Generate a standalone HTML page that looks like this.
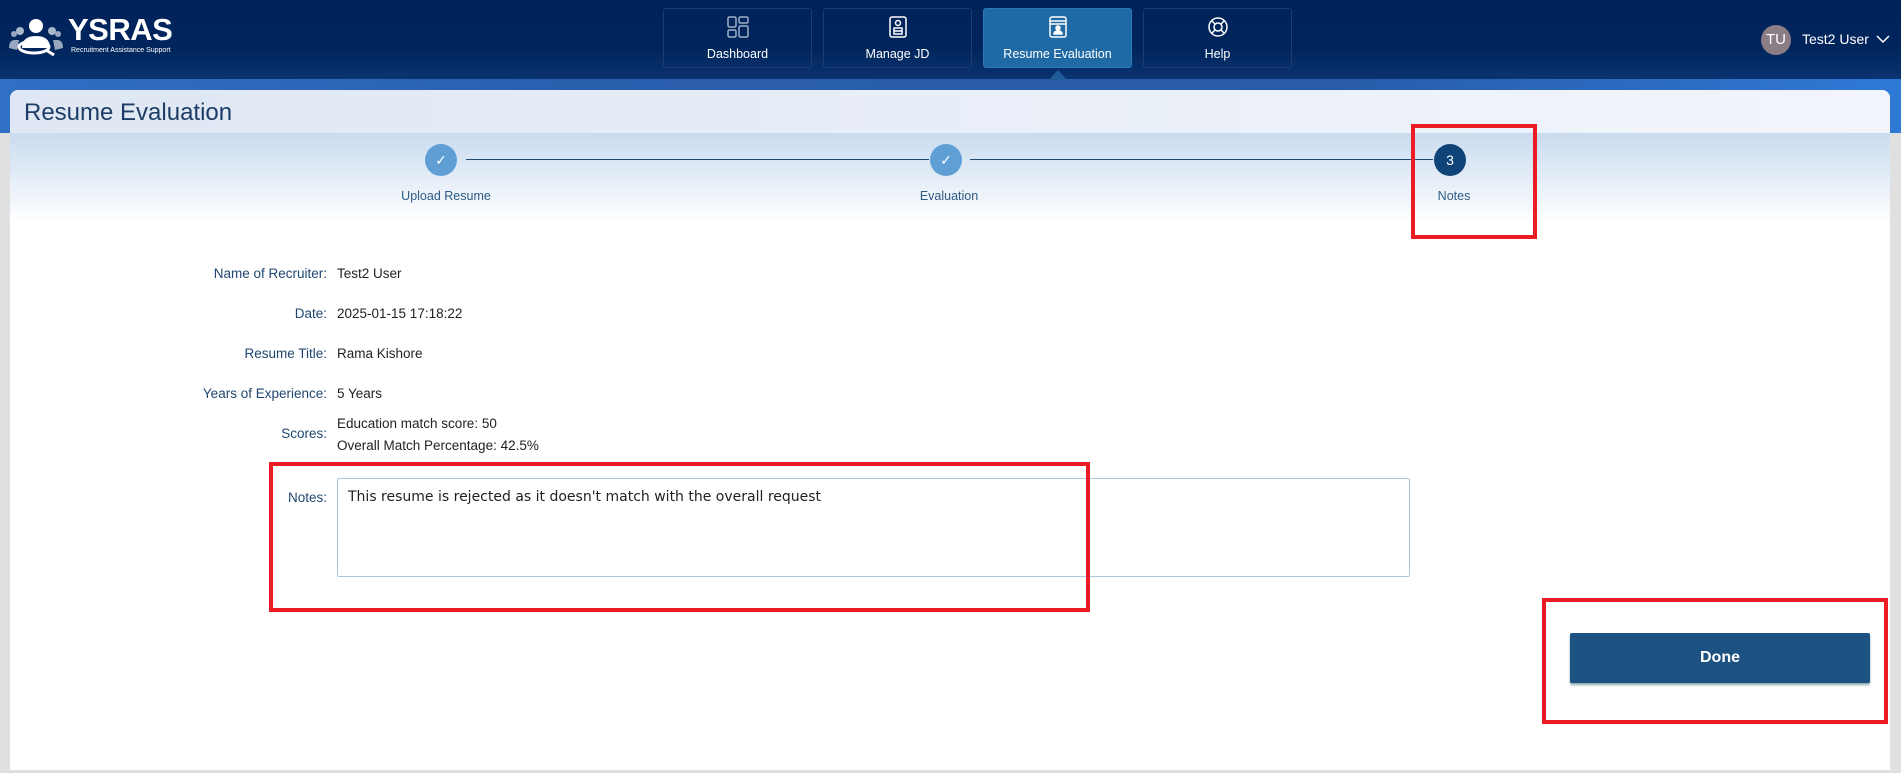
<!DOCTYPE html>
<html><head><meta charset="utf-8"><style>
*{margin:0;padding:0;box-sizing:border-box}
body{width:1901px;height:764px;overflow:hidden;font-family:"Liberation Sans",sans-serif;background:#e0e0e0;position:relative}
.a{position:absolute}
.hdr{left:0;top:0;width:1901px;height:79px;background:linear-gradient(#00225a,#00255c 60%,#0b3370)}
.band{left:0;top:79px;width:1901px;height:54px;background:linear-gradient(90deg,#2f6fc4,#2a5fae 30%,#285ba9 70%,#2f79d6)}
.nav{top:8px;height:60px;width:149px;border:1px solid #1e3d6e;border-radius:3px;color:#fff;font-size:12.5px;text-align:center}
.nav span{position:absolute;left:0;right:0;top:38px}
.nav svg{position:absolute;left:62px;top:6px}
.card{left:10px;top:90px;width:1880px;height:680px;background:#fff;border-radius:8px 8px 0 0;overflow:hidden}
.title{left:0;top:0;width:1880px;height:43px;background:linear-gradient(90deg,#dfe7f4,#f2f5fb)}
.step{left:0;top:43px;width:1880px;height:90px;background:linear-gradient(#c9dbef,#fff)}
.c{width:32px;height:32px;border-radius:50%;color:#fff;text-align:center;line-height:32px;font-size:14px}
.lbl{font-size:12.5px;color:#2d5a86;text-align:center;width:200px}
.f{font-size:13.5px;color:#1f4670;text-align:right;width:327px;left:0}
.v{font-size:13.5px;color:#222;left:337px}
.red{border:4px solid #ec1c24}
</style></head><body>
<div class="a hdr"></div>
<div class="a band"></div>
<svg class="a" style="left:6px;top:14px" width="60" height="42" viewBox="0 0 60 42">
<circle cx="8" cy="20" r="3" fill="#9aa8bf"/><circle cx="14" cy="17" r="4" fill="#aab6ca"/><circle cx="46" cy="17" r="4" fill="#aab6ca"/><circle cx="52" cy="20" r="3" fill="#9aa8bf"/>
<path d="M3 34q0-8 6-8h4l-2 10z" fill="#9aa8bf"/><path d="M57 34q0-8-6-8h-4l2 10z" fill="#9aa8bf"/>
<circle cx="30" cy="12" r="7" fill="#fff"/><path d="M16 34q0-12 14-12t14 12z" fill="#fff"/>
<ellipse cx="28" cy="33" rx="15" ry="6" fill="none" stroke="#fff" stroke-width="3"/><path d="M40 36l8 5" stroke="#fff" stroke-width="3"/>
</svg>
<div class="a" style="left:68px;top:12px;color:#fff;font-weight:bold;font-size:31px;letter-spacing:-0.5px">YSRAS</div>
<div class="a" style="left:71px;top:47px;color:#fff;font-size:7px">Recruitment Assistance Support</div>
<div class="a nav" style="left:663px"><svg width="24" height="24" viewBox="0 0 24 24" fill="none" stroke="#9fb0c8" stroke-width="1.5"><rect x="2" y="2" width="8" height="10" rx="1.5"/><rect x="13" y="2" width="9" height="6" rx="1.5"/><rect x="2" y="15" width="8" height="7" rx="1.5"/><rect x="13" y="11" width="9" height="11" rx="1.5"/></svg><span>Dashboard</span></div>
<div class="a nav" style="left:823px"><svg width="24" height="24" viewBox="0 0 24 24" fill="none" stroke="#fff" stroke-width="1.5"><rect x="4" y="2" width="16" height="20" rx="2"/><circle cx="12" cy="8" r="2.5"/><rect x="8" y="13" width="8" height="6"/><path d="M8 16h8"/></svg><span>Manage JD</span></div>
<div class="a nav" style="left:983px;background:#1f6aa5;border-color:#2a78b5"><svg width="24" height="24" viewBox="0 0 24 24" fill="none" stroke="#fff" stroke-width="1.5"><rect x="4" y="2" width="16" height="20" rx="2"/><path d="M4 6h16M4 9h16"/><circle cx="12" cy="13" r="2" fill="#fff"/><path d="M8 19q0-3 4-3t4 3z" fill="#fff"/></svg><span>Resume Evaluation</span></div>
<div class="a" style="left:1049px;top:70px;width:0;height:0;border-left:9px solid transparent;border-right:9px solid transparent;border-bottom:10px solid #1f5c98"></div>
<div class="a nav" style="left:1143px"><svg width="24" height="24" viewBox="0 0 24 24" fill="none" stroke="#fff" stroke-width="1.5"><circle cx="12" cy="12" r="9"/><circle cx="12" cy="12" r="4"/><path d="M6 6l3 3M18 6l-3 3M6 18l3-3M18 18l-3-3"/></svg><span>Help</span></div>
<div class="a" style="left:1761px;top:25px;width:30px;height:30px;border-radius:50%;background:#8b7d87;color:#fff;font-size:15px;text-align:center;line-height:30px">TU</div>
<div class="a" style="left:1802px;top:31px;color:#fff;font-size:14px">Test2 User</div>
<svg class="a" style="left:1876px;top:34px" width="14" height="10" viewBox="0 0 14 10"><path d="M1 2l6 6 6-6" fill="none" stroke="#fff" stroke-width="1.5"/></svg>

<div class="a card">
<div class="a title"></div>
<div class="a" style="left:14px;top:9px;font-size:24px;color:#1e3d66">Resume Evaluation</div>
<div class="a step"></div>
<div class="a" style="left:456px;top:69px;width:463px;height:1px;background:#1d4b78"></div>
<div class="a" style="left:960px;top:69px;width:463px;height:1px;background:#1d4b78"></div>
<div class="a c" style="left:415px;top:54px;background:#5f9fd6">✓</div>
<div class="a c" style="left:920px;top:54px;background:#5f9fd6">✓</div>
<div class="a c" style="left:1424px;top:54px;background:#0e4477">3</div>
<div class="a lbl" style="left:336px;top:99px">Upload Resume</div>
<div class="a lbl" style="left:839px;top:99px">Evaluation</div>
<div class="a lbl" style="left:1344px;top:99px">Notes</div>
</div>
<div class="a" style="left:0;top:133px;width:10px;height:640px;background:#e0e0e0"></div>
<div class="a" style="left:1891px;top:133px;width:10px;height:640px;background:#e0e0e0"></div>

<div class="a f" style="top:266px">Name of Recruiter:</div><div class="a v" style="top:266px">Test2 User</div>
<div class="a f" style="top:306px">Date:</div><div class="a v" style="top:306px">2025-01-15 17:18:22</div>
<div class="a f" style="top:346px">Resume Title:</div><div class="a v" style="top:346px">Rama Kishore</div>
<div class="a f" style="top:386px">Years of Experience:</div><div class="a v" style="top:386px">5 Years</div>
<div class="a f" style="top:426px">Scores:</div><div class="a v" style="top:416px">Education match score: 50</div>
<div class="a v" style="top:438px">Overall Match Percentage: 42.5%</div>
<div class="a f" style="top:490px">Notes:</div>
<div class="a" style="left:337px;top:478px;width:1073px;height:99px;border:1px solid #a9c6e0;border-radius:2px;padding:10px;font-family:'DejaVu Sans',sans-serif;font-size:14px;color:#222">This resume is rejected as it doesn't match with the overall request</div>
<div class="a" style="left:1570px;top:633px;width:300px;height:50px;background:#1c5281;color:#fff;font-weight:bold;font-size:16px;text-align:center;line-height:50px;border-radius:2px;box-shadow:0 2px 2px #8aa">Done</div>

<div class="a red" style="left:1411px;top:124px;width:126px;height:115px"></div>
<div class="a red" style="left:269px;top:462px;width:821px;height:150px"></div>
<div class="a red" style="left:1542px;top:598px;width:346px;height:126px"></div>
</body></html>
